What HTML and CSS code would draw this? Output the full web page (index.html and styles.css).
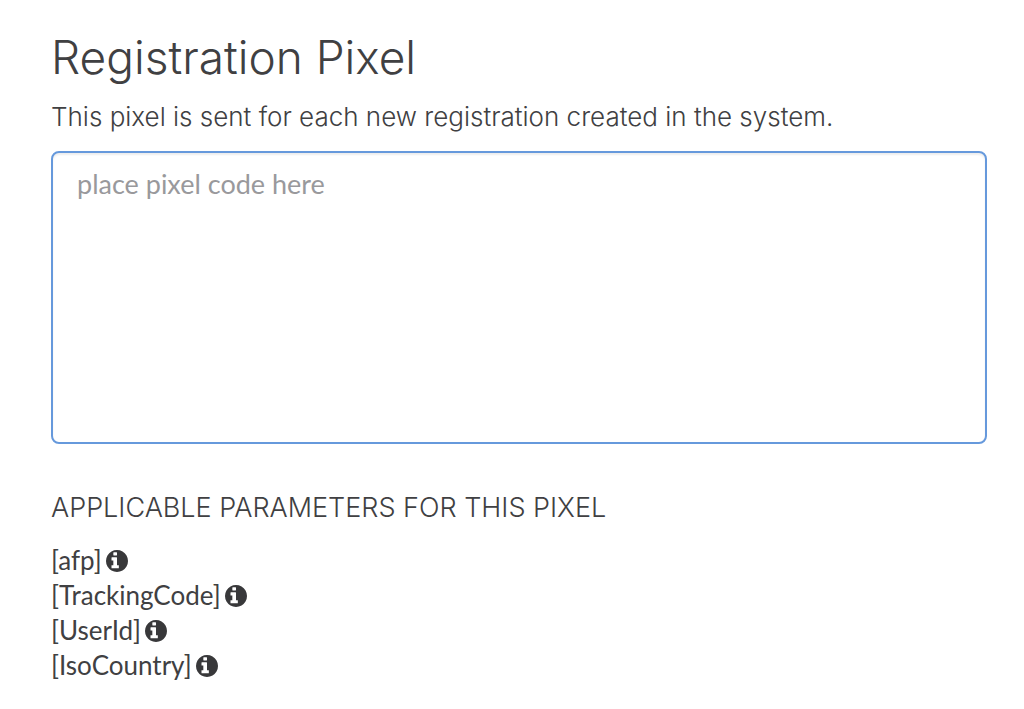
FILE: index.html
```html
<!DOCTYPE html>
<html lang="en">
<head>
<meta charset="utf-8">
<meta name="viewport" content="width=device-width, initial-scale=1">
<title>Registration Pixel</title>
<link rel="stylesheet" href="styles.css">
</head>
<body>
<svg class="sprite" aria-hidden="true">
<symbol id="info" viewBox="128 128 1536 1536"><path d="M1024 1376v-160q0-14-9-23t-23-9h-96v-512q0-14-9-23t-23-9h-320q-14 0-23 9t-9 23v160q0 14 9 23t23 9h96v320h-96q-14 0-23 9t-9 23v160q0 14 9 23t23 9h448q14 0 23-9t9-23zm-128-896v-160q0-14-9-23t-23-9h-192q-14 0-23 9t-9 23v160q0 14 9 23t23 9h192q14 0 23-9t9-23zm768 416q0 209-103 385.5t-279.5 279.5-385.5 103-385.5-103-279.5-279.5-103-385.5 103-385.5 279.5-279.5 385.5-103 385.5 103 279.5 279.5 103 385.5z"/></symbol>
</svg>
<main class="page">
<h1 class="title"><label for="pixel-code">Registration Pixel</label></h1>
<p class="lead" id="pixel-help">This pixel is sent for each new registration created in the system.</p>
<textarea class="code" id="pixel-code" aria-describedby="pixel-help" placeholder="place pixel code here"></textarea>
<h2 class="subtitle">APPLICABLE PARAMETERS FOR THIS PIXEL</h2>
<ul class="params">
<li class="param">[afp]<svg class="icon" role="img" aria-label="Information"><use href="#info"/></svg></li>
<li class="param">[TrackingCode]<svg class="icon" role="img" aria-label="Information"><use href="#info"/></svg></li>
<li class="param">[UserId]<svg class="icon" role="img" aria-label="Information"><use href="#info"/></svg></li>
<li class="param">[IsoCountry]<svg class="icon" role="img" aria-label="Information"><use href="#info"/></svg></li>
</ul>
</main>
</body>
</html>
```
FILE: styles.css
```css
* { box-sizing: border-box; }
body { margin: 0; background: #fff; color: #404042; font-family: Inter, "Liberation Sans", sans-serif; }
.sprite { position: absolute; width: 0; height: 0; }
.page { padding: 27px 37px 24px 51px; }
.title { margin: 0; font-size: 46px; line-height: 60px; font-weight: 300; }
.lead { margin: 12px 0 16px; font-size: 26px; line-height: 36px; font-weight: 300; }
.code { display: block; width: 100%; height: 293px; padding: 13px 24px; border: 2px solid #6699dc; border-radius: 8px; background: #fff; box-shadow: inset 0 2px 2px rgba(0, 0, 0, 0.07); color: #404042; font-family: Lato, sans-serif; font-size: 27px; line-height: 36px; resize: none; outline: none; }
.code::placeholder { color: #99999c; opacity: 1; }
.subtitle { margin: 46px 0 17px; font-size: 27px; line-height: 36px; font-weight: 300; }
.params { margin: 0; padding: 0; list-style: none; font-family: Lato, sans-serif; font-size: 26px; line-height: 35px; }
.param { display: flex; align-items: center; gap: 4px; }
.icon { width: 22px; height: 22px; fill: #38383a; }
```
